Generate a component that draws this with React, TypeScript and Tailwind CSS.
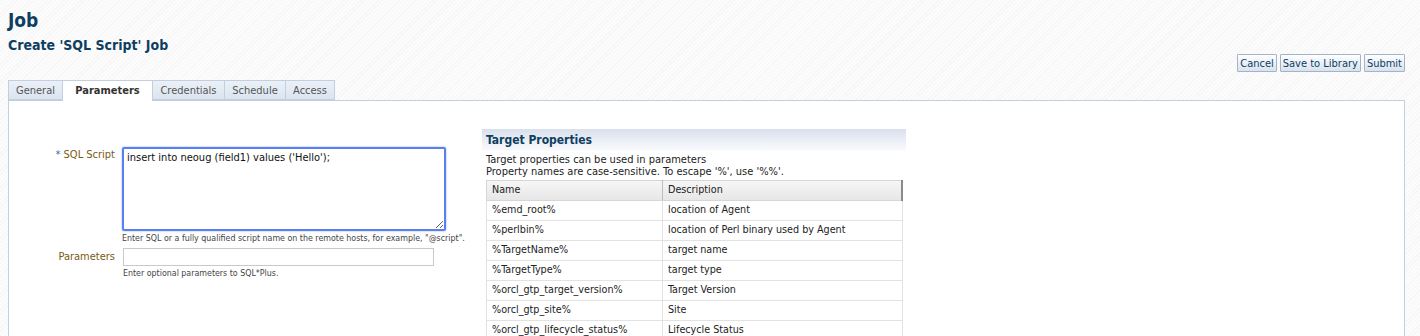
import React from "react"

const tabs = [
  { label: "General", w: "w-[55px]" },
  { label: "Parameters", w: "w-[91px]" },
  { label: "Credentials", w: "w-[73px]" },
  { label: "Schedule", w: "w-[62px]" },
  { label: "Access", w: "w-[50px]" },
]

const props = [
  ["%emd_root%", "location of Agent"],
  ["%perlbin%", "location of Perl binary used by Agent"],
  ["%TargetName%", "target name"],
  ["%TargetType%", "target type"],
  ["%orcl_gtp_target_version%", "Target Version"],
  ["%orcl_gtp_site%", "Site"],
  ["%orcl_gtp_lifecycle_status%", "Lifecycle Status"],
]

function Btn({ label }: { label: string }) {
  return (
    <button className="h-[18px] px-[2px] border border-[#a3b4c8] rounded-[1px] bg-gradient-to-b from-white to-[#d8e2ee] text-[11px] leading-none text-[#0f3d63]">
      {label}
    </button>
  )
}

export default function App() {
  return (
    <div
      className="w-[1420px] h-[336px] overflow-hidden bg-[repeating-linear-gradient(135deg,#f6f6f6_0px,#f6f6f6_1px,#fcfcfc_1px,#fcfcfc_3px)] pl-2 pr-[15px] pt-[9px] text-[#333]"
      style={{ fontFamily: '"DejaVu Sans Condensed", Tahoma, "DejaVu Sans", sans-serif' }}
    >
      <h1 className="text-[19px] font-bold leading-[22px] text-[#0e3e62]">Job</h1>
      <h2 className="mt-[6px] text-[14px] font-bold leading-[17px] text-[#0e3e62]">Create 'SQL Script' Job</h2>

      {/* page actions */}
      <div className="flex justify-end gap-[3px] mt-0">
        <Btn label="Cancel" />
        <Btn label="Save to Library" />
        <Btn label="Submit" />
      </div>

      {/* tabs */}
      <div className="flex mt-[8px] h-[21px]">
        {tabs.map((t) =>
          t.label === "Parameters" ? (
            <div
              key={t.label}
              className={`${t.w} h-[21px] -ml-px border border-b-0 border-[#c3cfdf] bg-white text-center text-[11px] leading-[20px] font-bold text-[#333] relative z-10`}
            >
              {t.label}
            </div>
          ) : (
            <div
              key={t.label}
              className={`${t.w} h-[20px] -ml-px first:ml-0 border border-[#c3cfdf] bg-gradient-to-b from-[#eaf0f7] to-[#dbe5f0] text-center text-[11px] leading-[19px] text-[#555]`}
            >
              {t.label}
            </div>
          )
        )}
      </div>

      {/* panel */}
      <div className="-mt-px border border-[#c3cfdf] bg-white h-[300px] flex">
        {/* form */}
        <div className="w-[473px] pt-[46px]">
          <div className="flex">
            <div className="w-[106px] text-right text-[11px] leading-[14px] pt-[1px] text-[#7a5a10]">
              <span className="text-[#3b6ea8]">*</span> SQL Script
            </div>
            <div className="ml-[7px]">
              <textarea
                readOnly
                defaultValue="insert into neoug (field1) values ('Hello');"
                className="block w-[324px] h-[84px] border-2 border-[#5a7ff0] rounded-[2px] shadow-[0_0_2px_#8aa5f5] px-[3px] pt-[2px] text-[11px] leading-[14px] text-[#111] outline-none"
                style={{ fontFamily: "inherit" }}
              />
              <div className="mt-[2px] text-[8.8px] leading-[11px] text-[#444] whitespace-nowrap">
                Enter SQL or a fully qualified script name on the remote hosts, for example, "@script".
              </div>
            </div>
          </div>
          <div className="flex mt-[4px]">
            <div className="w-[106px] text-right text-[11px] leading-[18px] text-[#7a5a10]">Parameters</div>
            <div className="ml-[8px]">
              <div className="w-[311px] h-[18px] border border-[#c9c9c9] bg-white" />
              <div className="mt-[2px] text-[8.8px] leading-[11px] text-[#444]">Enter optional parameters to SQL*Plus.</div>
            </div>
          </div>
        </div>

        {/* target properties */}
        <div className="pt-[28px]">
          <div className="w-[424px] h-[22px] bg-gradient-to-b from-[#d9e0ec] to-[#fafbfd] pl-[4px] text-[12px] font-bold leading-[22px] text-[#0e3e62]">
            Target Properties
          </div>
          <div className="pl-[4px] pt-[3px] text-[11px] leading-[12px] text-[#222]">
            <div>Target properties can be used in parameters</div>
            <div>Property names are case-sensitive. To escape '%', use '%%'.</div>
          </div>
          <table className="ml-[4px] mt-[2px] w-[417px] border-collapse text-[10.7px] text-[#222]">
            <thead>
              <tr className="h-[20px] bg-gradient-to-b from-[#f6f6f6] to-[#e6e6e6]">
                <th className="w-[176px] border border-[#d6d6d6] border-r-[#bdbdbd] text-left font-normal pl-[5px]">Name</th>
                <th className="border border-[#d6d6d6] border-r-[#8a8a8a] border-r-2 text-left font-normal pl-[5px]">Description</th>
              </tr>
            </thead>
            <tbody>
              {props.map(([n, d]) => (
                <tr key={n} className="h-[20px]">
                  <td className="border border-[#e2e2e2] pl-[5px]">{n}</td>
                  <td className="border border-[#e2e2e2] pl-[5px]">{d}</td>
                </tr>
              ))}
            </tbody>
          </table>
        </div>
      </div>
    </div>
  )
}
